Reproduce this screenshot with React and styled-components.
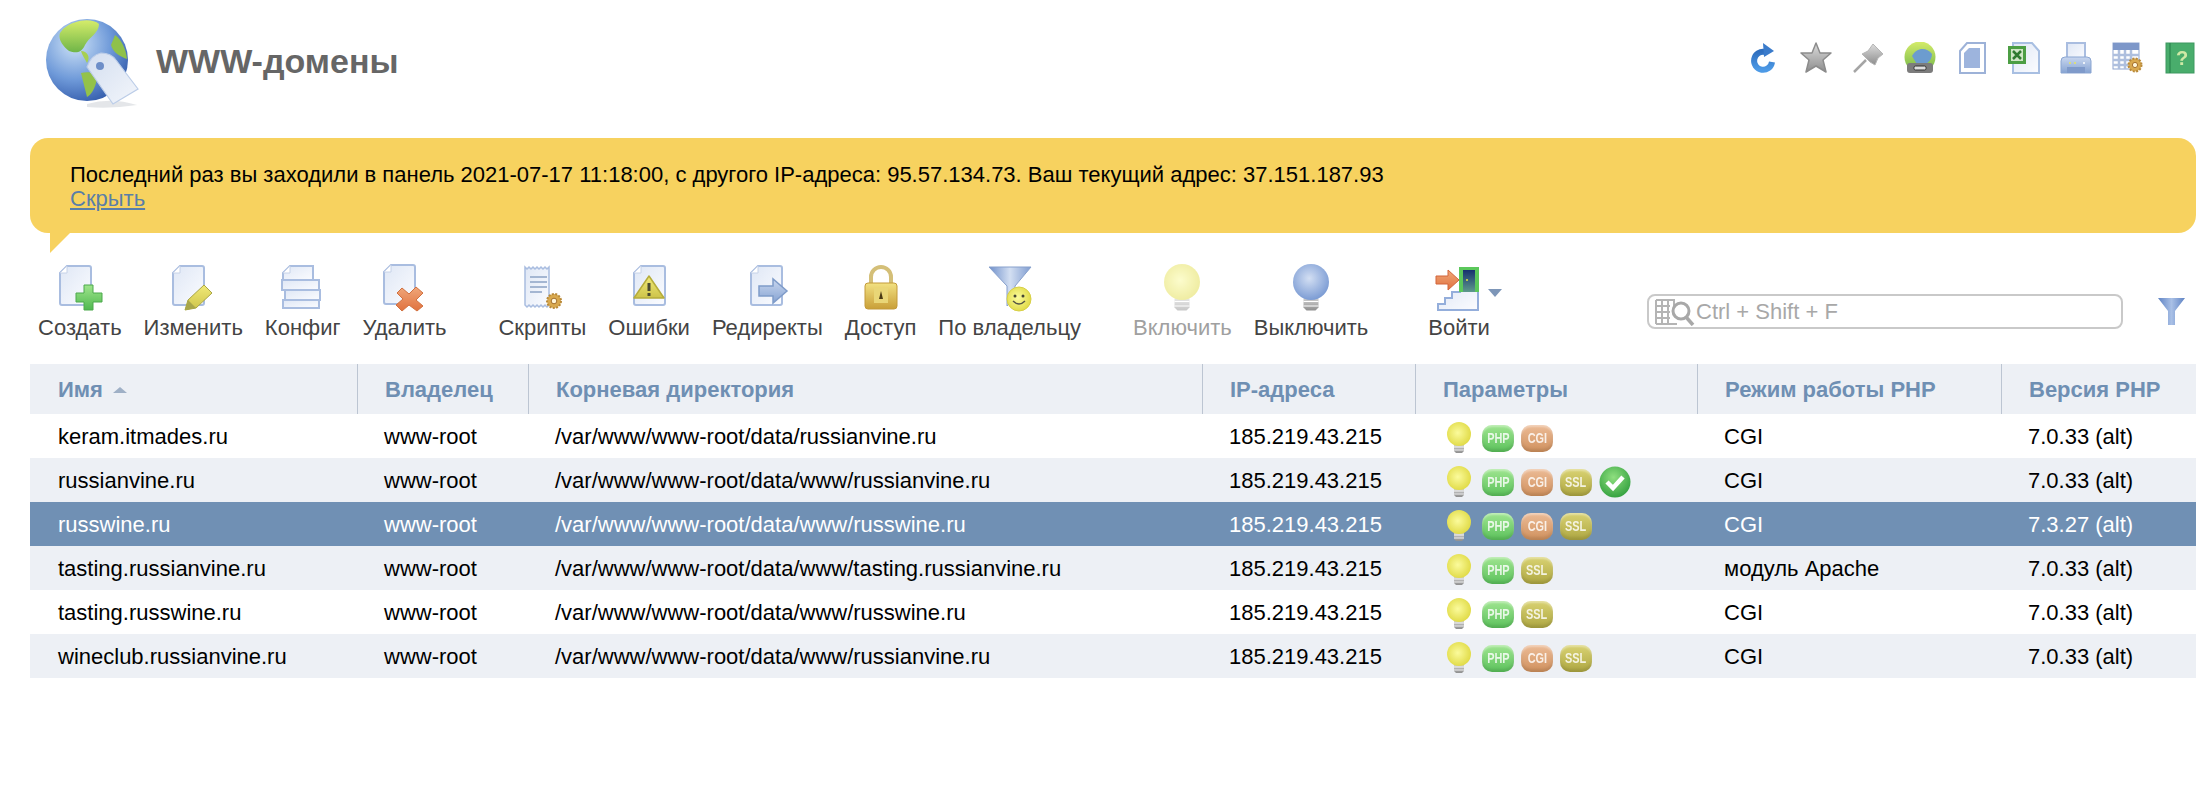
import React from 'react'
import styled, { createGlobalStyle } from 'styled-components'

const GlobalStyle = createGlobalStyle`
  html, body { margin: 0; padding: 0; background: #fff; }
  body { font-family: "Liberation Sans", Arial, sans-serif; font-size: 22px; color: #000; }
`

const Page = styled.div`
  padding: 0 16px 0 30px;
  height: 800px;
  box-sizing: border-box;
`
const Header = styled.header`
  display: flex;
  align-items: center;
  height: 122px;
  margin-bottom: 16px;
`
const Title = styled.h1`
  margin: 0 0 0 15px;
  font-size: 34px;
  font-weight: bold;
  color: #666;
`
const GlobeBox = styled.div`
  width: 96px;
  height: 96px;
  margin-left: 15px;
`
const HeaderTools = styled.div`
  margin-left: auto;
  display: flex;
  gap: 20px;
  margin-top: -7px;
`
const Banner = styled.div`
  position: relative;
  height: 95px;
  box-sizing: border-box;
  padding: 25px 40px 0;
  background: #f7d25f;
  border-radius: 18px;
  line-height: 24px;
  margin-bottom: 31px;
  &::after {
    content: '';
    position: absolute;
    left: 20px;
    top: 95px;
    border-right: 20px solid transparent;
    border-top: 20px solid #f7d25f;
  }
`
const HideLink = styled.a`
  display: block;
  width: max-content;
  color: #5a7ea8;
  text-decoration: underline;
`
const Toolbar = styled.div`
  display: flex;
  align-items: flex-start;
  height: 100px;
  margin-left: -3px;
`
const ToolItem = styled.div`
  position: relative;
  display: flex;
  flex-direction: column;
  align-items: center;
  padding: 0 11px;
  margin-left: ${p => p.$gap || 0}px;
  color: ${p => (p.$off ? '#a0a0a0' : '#444')};
`
const ToolLabel = styled.span`
  margin-top: 4px;
  line-height: 24px;
  white-space: nowrap;
`
const DropArrow = styled.span`
  position: absolute;
  left: 71px;
  top: 25px;
  border-left: 7px solid transparent;
  border-right: 7px solid transparent;
  border-top: 8px solid #7d96b8;
`
const SearchBox = styled.div`
  display: flex;
  align-items: center;
  width: 476px;
  height: 35px;
  box-sizing: border-box;
  margin: 30px 0 0 auto;
  padding-left: 6px;
  border: 2px solid #c9c9c9;
  border-radius: 8px;
  color: #a8a8a8;
`
const SearchHint = styled.span`
  margin: 1px 0 0 1px;
`
const FilterButton = styled.div`
  margin: 34px 11px 0 35px;
`
const Table = styled.div`
  display: flex;
  flex-direction: column;
`
const Row = styled.div`
  display: grid;
  grid-template-columns: 328px 171px 674px 213px 282px 304px 194px;
  height: ${p => (p.$head ? 50 : 44)}px;
  align-items: stretch;
  background: ${p => (p.$selected ? '#7090b4' : p.$stripe ? '#edf0f5' : '#fff')};
  color: ${p => (p.$selected ? '#fff' : p.$head ? '#6f8fb3' : '#000')};
  font-weight: ${p => (p.$head ? 'bold' : 'normal')};
`
const Cell = styled.div`
  display: flex;
  align-items: center;
  padding-left: ${p => (p.$first ? 28 : 26)}px;
  padding-top: 2px;
  white-space: nowrap;
`
const HeadCell = styled(Cell)`
  border-left: ${p => (p.$first ? 'none' : '1px solid #bcc5d2')};
  margin-left: ${p => (p.$first ? 0 : -1)}px;
  padding-left: ${p => (p.$first ? 28 : 27)}px;
`
const SortArrow = styled.span`
  margin-left: 10px;
  border-left: 7px solid transparent;
  border-right: 7px solid transparent;
  border-bottom: 6px solid #9fb0c6;
`
const Params = styled.div`
  display: flex;
  align-items: center;
  gap: 7px;
  padding-top: 2px;
  margin-left: 1px;
`
const Badge = styled.span`
  display: flex;
  align-items: center;
  justify-content: center;
  width: 32px;
  height: 27px;
  border-radius: 10px;
  box-shadow: inset 0 -3px 3px rgba(0, 0, 0, 0.1), inset 0 2px 2px rgba(255, 255, 255, 0.35);
  background: ${p => ({
    php: 'linear-gradient(#9fe590, #5cc25c)',
    cgi: 'linear-gradient(#ecbb96, #d0915e)',
    ssl: 'linear-gradient(#d9d272, #aea742)',
  }[p.$tone])};
`
const BadgeText = styled.span`
  font-size: 14px;
  font-weight: bold;
  line-height: 1;
  color: rgba(255, 255, 255, 0.82);
  transform: scaleX(0.78);
`
const Svg = styled.svg`
  display: block;
  flex: none;
  filter: blur(0.35px);
`
const Defs = styled.svg`
  position: absolute;
  width: 0;
  height: 0;
`

const Gear = ({ x, y, r = 7 }) => (
  <g>
    <circle cx={x} cy={y} r={r} fill="#d9a94e" stroke="#b98a3a" strokeWidth="2" strokeDasharray="2 1.4" />
    <circle cx={x} cy={y} r={r * 0.4} fill="#fff6d8" stroke="#a5702c" strokeWidth="1" />
  </g>
)

const Page48 = ({ x = 0, y = 0 }) => (
  <g transform={`translate(${x} ${y})`}>
    <path d="M4 9 L11 2 H33 a2 2 0 0 1 2 2 V39 a2 2 0 0 1 -2 2 H6 a2 2 0 0 1 -2 -2 Z" fill="url(#docFill)" stroke="#a9bde0" strokeWidth="2" />
    <path d="M4 9 H11 V2 Z" fill="#fff" stroke="#c6d2e8" strokeWidth="1" />
  </g>
)

const Icon48 = ({ children }) => <Svg width="48" height="48" viewBox="0 0 48 48">{children}</Svg>

const CreateIcon = () => (
  <Icon48>
    <Page48 />
    <path d="M28 21 H37 V29 H46 V38 H37 V46 H28 V38 H20 V29 H28 Z" fill="url(#green)" stroke="#4da94d" strokeWidth="1" />
  </Icon48>
)
const EditIcon = () => (
  <Icon48>
    <Page48 />
    <path d="M35 21 L43 29 L27 44 L16 46 L19 36 Z" fill="url(#olive)" stroke="#a9a546" strokeWidth="1" />
    <path d="M19 36 L27 44 L16 46 Z" fill="#a8a64a" />
  </Icon48>
)
const ConfigIcon = () => (
  <Icon48>
    <path d="M4 9 L11 2 H34 V16 H4 Z" fill="url(#docFill)" stroke="#a9bde0" strokeWidth="2" />
    <path d="M3 16 H40 V26 H3 Z" fill="url(#docFill)" stroke="#a9bde0" strokeWidth="2" />
    <path d="M6 26 H41 V36 H6 Z" fill="url(#docFill)" stroke="#a9bde0" strokeWidth="2" />
    <path d="M4 36 H40 V44 H4 Z" fill="url(#docFill)" stroke="#a9bde0" strokeWidth="2" />
    <path d="M4 9 H11 V2 Z" fill="#fff" stroke="#c6d2e8" />
  </Icon48>
)
const DeleteIcon = () => (
  <Icon48>
    <Page48 y={-1} />
    <path d="M22 24 L29 30 L36 23 L43 29 L36 36 L43 42 L37 47 L29 41 L22 47 L16 41 L23 35 L17 29 Z" fill="url(#orange)" stroke="#d1703f" strokeWidth="1" />
  </Icon48>
)
const ScriptsIcon = () => (
  <Icon48>
    <path d="M7 3 l2 2 2 -2 2 2 2 -2 2 2 2 -2 2 2 2 -2 2 2 2 -2 2 2 2 -2 V41 l-2 2 -2 -2 -2 2 -2 -2 -2 2 -2 -2 -2 2 -2 -2 -2 2 -2 -2 -2 2 -2 -2 Z" fill="url(#docFill)" stroke="#a9bde0" strokeWidth="1.5" />
    <path d="M12 13 H29 M12 18 H29 M12 23 H29 M12 28 H24" stroke="#a4b6d2" strokeWidth="2" />
    <Gear x={36} y={37} r={7} />
  </Icon48>
)
const ErrorsIcon = () => (
  <Icon48>
    <g transform="translate(5 0)"><Page48 /></g>
    <path d="M24 14 L39 36 H9 Z" transform="translate(0 -2)" fill="url(#olive)" stroke="#b5ac3b" strokeWidth="1.5" strokeLinejoin="round" />
    <path d="M24 19 V27 M24 29 V32" stroke="#4a4a30" strokeWidth="3" />
  </Icon48>
)
const RedirectIcon = () => (
  <Icon48>
    <g transform="translate(4 0)"><Page48 /></g>
    <path d="M16 22 H30 V15 L44 27 L30 39 V32 H16 Z" fill="url(#blue)" stroke="#7f9cc9" strokeWidth="1.5" />
  </Icon48>
)
const LockIcon = () => (
  <Icon48>
    <path d="M14 20 V13 a10 10 0 0 1 20 0 V20" fill="none" stroke="#d4bf78" strokeWidth="4" />
    <rect x="8" y="19" width="32" height="26" rx="3" fill="url(#gold)" stroke="#c39a3a" />
    <rect x="17" y="24" width="14" height="15" fill="#e9d677" />
    <path d="M24 27 l-2 8 h4 Z" fill="#4a3a14" />
  </Icon48>
)
const OwnerIcon = () => (
  <Icon48>
    <path d="M3 3 H45 L29 22 V34 L21 42 V22 Z" fill="url(#funnel)" stroke="#87a0cc" strokeWidth="1" />
    <circle cx="33" cy="35" r="12" fill="url(#bulbOn)" stroke="#d7cf47" />
    <circle cx="29" cy="32" r="1.5" fill="#443" />
    <circle cx="37" cy="32" r="1.5" fill="#443" />
    <path d="M27 37 Q33 43 39 37" fill="none" stroke="#554" strokeWidth="1.4" />
  </Icon48>
)
const Bulb = ({ fill, size = 32, faded }) => (
  <Svg width={size} height={size} viewBox="0 0 32 32" style={faded ? { opacity: 0.5 } : undefined}>
    <path d="M11 23 H21 V29 L19 31 H13 L11 29 Z" fill="url(#base)" />
    <path d="M11 25 H21 M11 28 H21" stroke="#fff" strokeWidth="0.8" />
    <circle cx="16" cy="12" r="12" fill={`url(#${fill})`} />
  </Svg>
)
const EnterIcon = () => (
  <Icon48>
    <path d="M3 46 V40 H10 V34 H17 V28 H25 V22 H43 V46 Z" fill="url(#docFill)" stroke="#94aedb" strokeWidth="2" />
    <rect x="24" y="3" width="20" height="25" fill="#5bc85b" />
    <rect x="28" y="6" width="12" height="22" fill="url(#door)" />
    <circle cx="32" cy="16" r="1" fill="#e7e23f" />
    <path d="M1 12 H13 V6 L24 16 L13 26 V20 H1 Z" fill="url(#orange)" stroke="#d2653a" strokeWidth="1" />
  </Icon48>
)
const FunnelIcon = () => (
  <Svg width="27" height="28" viewBox="0 0 27 28">
    <path d="M0 0 H27 L17 13 V27 L10 27 V13 Z" fill="url(#funnel2)" />
  </Svg>
)
const SearchIcon = () => (
  <Svg width="40" height="28" viewBox="0 0 40 28">
    <path d="M1 2 H20 M1 8 H15 M1 14 H15 M1 20 H15 M1 26 H22 M1 2 V26 M7 2 V26 M13 2 V26 M19 2 V8" stroke="#b4b4b4" strokeWidth="2" fill="none" />
    <circle cx="26" cy="13" r="8" fill="#fff" stroke="#a8a8a8" strokeWidth="3" />
    <path d="M31 19 L38 27" stroke="#a8a8a8" strokeWidth="3.5" />
  </Svg>
)
const CheckIcon = () => (
  <Svg width="32" height="32" viewBox="0 0 32 32">
    <circle cx="16" cy="16" r="15.5" fill="url(#check)" />
    <path d="M8 16 L14 22 L24 11" fill="none" stroke="#fff" strokeWidth="4.5" />
  </Svg>
)
const GlobeIcon = () => (
  <Svg width="96" height="96" viewBox="0 0 96 96">
    <circle cx="42" cy="47" r="41" fill="url(#globe)" />
    <path d="M18 16 C30 6 47 5 54 11 C54 20 44 24 40 32 C36 41 30 40 24 38 C17 32 13 26 15 20 Z" fill="url(#land)" />
    <path d="M36 38 C42 38 46 44 42 50 C40 46 37 42 36 38 Z" fill="#a7cf52" />
    <path d="M36 60 C44 58 52 60 52 66 C50 76 46 82 42 84 C40 76 38 68 36 60 Z" fill="#93c24a" />
    <path d="M70 22 C76 26 81 36 82 46 C76 44 68 40 66 32 Z" fill="#8fc14a" />
    <path d="M42 91 Q66 84 92 92 Q66 96 42 94 Z" fill="#d8dbe0" opacity="0.7" />
    <path d="M42 54 Q46 42 56 40 Q66 40 71 47 L93 76 L68 91 Z" fill="url(#tag)" stroke="#bccde8" strokeWidth="1.2" />
    <circle cx="55" cy="53" r="4" fill="#6d8ec8" />
  </Svg>
)
const Icon32 = ({ children }) => <Svg width="32" height="32" viewBox="0 0 32 32">{children}</Svg>
const RefreshIcon = () => (
  <Icon32>
    <path d="M17 10 A9 9 0 1 0 24 20" fill="none" stroke="url(#refresh)" strokeWidth="6" />
    <path d="M15 1 L26 9 L16 15 Z" fill="#3a7bcb" />
  </Icon32>
)
const StarIcon = () => (
  <Icon32>
    <path d="M16 1 L20 11 L31 11 L23 18 L26 30 L16 24 L6 30 L9 18 L1 11 L12 11 Z" fill="url(#silver)" stroke="#8c8c8c" strokeWidth="1.5" strokeLinejoin="round" />
  </Icon32>
)
const PinIcon = () => (
  <Icon32>
    <path d="M21 2 L31 12 L26 16 L23 23 L18 20 L10 12 L16 9 Z" fill="url(#silver)" stroke="#b5b5b5" />
    <path d="M14 18 L2 30" stroke="#a5a5a5" strokeWidth="2.5" />
  </Icon32>
)
const WebIcon = () => (
  <Icon32>
    <circle cx="16" cy="15" r="15.5" fill="url(#land)" />
    <path d="M8 14 C12 6 22 4 28 12 C28 20 20 24 14 24 Z" fill="#6c9ccf" />
    <rect x="3" y="21" width="26" height="10" rx="3" fill="#7c7c7c" />
    <rect x="10" y="24" width="12" height="4" rx="1.5" fill="#ddd" stroke="#333" />
  </Icon32>
)
const PageBlueIcon = () => (
  <Icon32>
    <path d="M4 9 L11 1 H29 V31 H4 Z" fill="#fff" stroke="#9db2d8" strokeWidth="2" />
    <path d="M8 11 L13 6 H24 V26 H8 Z" fill="#9db4dd" />
  </Icon32>
)
const ExcelIcon = () => (
  <Icon32>
    <path d="M5 1 H24 L31 9 V31 H5 Z" fill="url(#docFill)" stroke="#a8bfe2" strokeWidth="2" />
    <rect x="0" y="4" width="18" height="18" fill="#4c9e44" />
    <rect x="3" y="7" width="12" height="12" fill="#cfe6c5" />
    <path d="M5 9 L13 17 M13 9 L5 17" stroke="#2f7a2f" strokeWidth="2.5" />
  </Icon32>
)
const PrinterIcon = () => (
  <Icon32>
    <rect x="7" y="1" width="18" height="18" fill="url(#docFill)" stroke="#a9bde0" strokeWidth="2" />
    <path d="M1 19 Q1 15 5 15 H27 Q31 15 31 19 V31 H1 Z" fill="url(#blue)" stroke="#8ba6d2" />
    <rect x="7" y="25" width="18" height="6" fill="#7f9aca" />
    <circle cx="10" cy="21" r="1" fill="#e8e45c" />
    <circle cx="15" cy="21" r="1" fill="#e8e45c" />
    <circle cx="24" cy="21" r="1" fill="#fff" />
  </Icon32>
)
const TableGearIcon = () => (
  <Icon32>
    <rect x="1" y="1" width="26" height="26" fill="#fff" stroke="#8da4cf" />
    <rect x="1" y="1" width="26" height="7" fill="#7d97c9" />
    <path d="M1 13 H27 M1 18 H27 M1 23 H27 M7 8 V27 M13 8 V27 M19 8 V27" stroke="#aebfde" strokeWidth="2.5" />
    <Gear x={23} y={23} r={6.5} />
  </Icon32>
)
const HelpIcon = () => (
  <Icon32>
    <rect x="2" y="1" width="28" height="30" fill="#49ad6c" stroke="#3e9860" />
    <path d="M6 1 V31" stroke="#2f8a52" strokeWidth="1.4" />
    <text x="18" y="23" textAnchor="middle" fontFamily="Liberation Sans" fontSize="20" fontWeight="bold" fill="#cfe9a6">?</text>
  </Icon32>
)

const SharedGradients = () => (
  <Defs aria-hidden="true">
    <defs>
      <linearGradient id="docFill" x1="0" y1="0" x2="1" y2="1"><stop offset="0" stopColor="#dfe7f5" /><stop offset="1" stopColor="#fbfcff" /></linearGradient>
      <linearGradient id="green" x1="0" y1="0" x2="0" y2="1"><stop offset="0" stopColor="#9fe58c" /><stop offset="1" stopColor="#4fb84f" /></linearGradient>
      <linearGradient id="olive" x1="0" y1="0" x2="0" y2="1"><stop offset="0" stopColor="#f1ea77" /><stop offset="1" stopColor="#cdc34a" /></linearGradient>
      <linearGradient id="orange" x1="0" y1="0" x2="0" y2="1"><stop offset="0" stopColor="#f0a77a" /><stop offset="1" stopColor="#e0723f" /></linearGradient>
      <linearGradient id="blue" x1="0" y1="0" x2="0" y2="1"><stop offset="0" stopColor="#c9d7ef" /><stop offset="1" stopColor="#86a3d2" /></linearGradient>
      <linearGradient id="gold" x1="0" y1="0" x2="0" y2="1"><stop offset="0" stopColor="#f2e182" /><stop offset="1" stopColor="#c99f38" /></linearGradient>
      <linearGradient id="funnel" x1="0" y1="0" x2="1" y2="0"><stop offset="0" stopColor="#6e8fca" /><stop offset="0.5" stopColor="#d3dff2" /><stop offset="1" stopColor="#7f9cd0" /></linearGradient>
      <linearGradient id="funnel2" x1="0" y1="0" x2="1" y2="0"><stop offset="0" stopColor="#5f83c4" /><stop offset="0.5" stopColor="#a9c0e6" /><stop offset="1" stopColor="#5f83c4" /></linearGradient>
      <linearGradient id="base" x1="0" y1="0" x2="0" y2="1"><stop offset="0" stopColor="#cfcfcf" /><stop offset="1" stopColor="#8f8f8f" /></linearGradient>
      <linearGradient id="door" x1="0" y1="0" x2="0" y2="1"><stop offset="0" stopColor="#17306e" /><stop offset="1" stopColor="#5e9a8c" /></linearGradient>
      <linearGradient id="land" x1="0" y1="0" x2="0" y2="1"><stop offset="0" stopColor="#d5ec6a" /><stop offset="1" stopColor="#6fb548" /></linearGradient>
      <linearGradient id="tag" x1="0" y1="0" x2="1" y2="1"><stop offset="0" stopColor="#d3def0" /><stop offset="1" stopColor="#f3f6fb" /></linearGradient>
      <linearGradient id="refresh" x1="0" y1="0" x2="0" y2="1"><stop offset="0" stopColor="#2f6fbf" /><stop offset="1" stopColor="#4d9ae6" /></linearGradient>
      <linearGradient id="silver" x1="0" y1="0" x2="0" y2="1"><stop offset="0" stopColor="#dcdcdc" /><stop offset="1" stopColor="#8d8d8d" /></linearGradient>
      <radialGradient id="bulbOn" cx="0.45" cy="0.45" r="0.6"><stop offset="0" stopColor="#fbfb9c" /><stop offset="1" stopColor="#dfd942" /></radialGradient>
      <radialGradient id="bulbBlue" cx="0.45" cy="0.4" r="0.6"><stop offset="0" stopColor="#d3dff3" /><stop offset="1" stopColor="#7c9cd4" /></radialGradient>
      <radialGradient id="check" cx="0.45" cy="0.35" r="0.7"><stop offset="0" stopColor="#8fdf7f" /><stop offset="1" stopColor="#2f9e3c" /></radialGradient>
      <radialGradient id="globe" cx="0.35" cy="0.3" r="0.8"><stop offset="0" stopColor="#cfe3f7" /><stop offset="0.55" stopColor="#6f9ad9" /><stop offset="1" stopColor="#2c54a6" /></radialGradient>
    </defs>
  </Defs>
)

const TOOLS = [
  { label: 'Создать', icon: <CreateIcon /> },
  { label: 'Изменить', icon: <EditIcon /> },
  { label: 'Конфиг', icon: <ConfigIcon /> },
  { label: 'Удалить', icon: <DeleteIcon /> },
  { label: 'Скрипты', icon: <ScriptsIcon />, gap: 30 },
  { label: 'Ошибки', icon: <ErrorsIcon /> },
  { label: 'Редиректы', icon: <RedirectIcon /> },
  { label: 'Доступ', icon: <LockIcon /> },
  { label: 'По владельцу', icon: <OwnerIcon /> },
  { label: 'Включить', icon: <Bulb fill="bulbOn" size={48} faded />, gap: 30, off: true },
  { label: 'Выключить', icon: <Bulb fill="bulbBlue" size={48} /> },
  { label: 'Войти', icon: <EnterIcon />, gap: 38, drop: true },
]

const HEAD = ['Имя', 'Владелец', 'Корневая директория', 'IP-адреса', 'Параметры', 'Режим работы PHP', 'Версия PHP']

const ROWS = [
  { name: 'keram.itmades.ru', dir: '/var/www/www-root/data/russianvine.ru', tags: ['php', 'cgi'], mode: 'CGI', ver: '7.0.33 (alt)' },
  { name: 'russianvine.ru', dir: '/var/www/www-root/data/www/russianvine.ru', tags: ['php', 'cgi', 'ssl'], check: true, mode: 'CGI', ver: '7.0.33 (alt)' },
  { name: 'russwine.ru', dir: '/var/www/www-root/data/www/russwine.ru', tags: ['php', 'cgi', 'ssl'], mode: 'CGI', ver: '7.3.27 (alt)', selected: true },
  { name: 'tasting.russianvine.ru', dir: '/var/www/www-root/data/www/tasting.russianvine.ru', tags: ['php', 'ssl'], mode: 'модуль Apache', ver: '7.0.33 (alt)' },
  { name: 'tasting.russwine.ru', dir: '/var/www/www-root/data/www/russwine.ru', tags: ['php', 'ssl'], mode: 'CGI', ver: '7.0.33 (alt)' },
  { name: 'wineclub.russianvine.ru', dir: '/var/www/www-root/data/www/russianvine.ru', tags: ['php', 'cgi', 'ssl'], mode: 'CGI', ver: '7.0.33 (alt)' },
]

const App = () => {
  return (
    <>
      <GlobalStyle />
      <SharedGradients />
      <Page>
        <Header>
          <GlobeBox><GlobeIcon /></GlobeBox>
          <Title>WWW-домены</Title>
          <HeaderTools>
            <RefreshIcon />
            <StarIcon />
            <PinIcon />
            <WebIcon />
            <PageBlueIcon />
            <ExcelIcon />
            <PrinterIcon />
            <TableGearIcon />
            <HelpIcon />
          </HeaderTools>
        </Header>

        <Banner>
          Последний раз вы заходили в панель 2021-07-17 11:18:00, с другого IP-адреса: 95.57.134.73. Ваш текущий адрес: 37.151.187.93
          <HideLink>Скрыть</HideLink>
        </Banner>

        <Toolbar>
          {TOOLS.map(t => (
            <ToolItem key={t.label} $gap={t.gap} $off={t.off}>
              {t.icon}
              <ToolLabel>{t.label}</ToolLabel>
              {t.drop && <DropArrow />}
            </ToolItem>
          ))}
          <SearchBox>
            <SearchIcon />
            <SearchHint>Ctrl + Shift + F</SearchHint>
          </SearchBox>
          <FilterButton><FunnelIcon /></FilterButton>
        </Toolbar>

        <Table>
          <Row $head $stripe>
            {HEAD.map((h, i) => (
              <HeadCell key={h} $first={i === 0}>
                {h}
                {i === 0 && <SortArrow />}
              </HeadCell>
            ))}
          </Row>
          {ROWS.map((r, i) => (
            <Row key={r.name} $stripe={i % 2 === 1} $selected={r.selected}>
              <Cell $first>{r.name}</Cell>
              <Cell>www-root</Cell>
              <Cell>{r.dir}</Cell>
              <Cell>185.219.43.215</Cell>
              <Cell>
                <Params>
                  <Bulb fill="bulbOn" />
                  {r.tags.map(tag => (
                    <Badge key={tag} $tone={tag}><BadgeText>{tag.toUpperCase()}</BadgeText></Badge>
                  ))}
                  {r.check && <CheckIcon />}
                </Params>
              </Cell>
              <Cell>{r.mode}</Cell>
              <Cell>{r.ver}</Cell>
            </Row>
          ))}
        </Table>
      </Page>
    </>
  )
}

export default App
